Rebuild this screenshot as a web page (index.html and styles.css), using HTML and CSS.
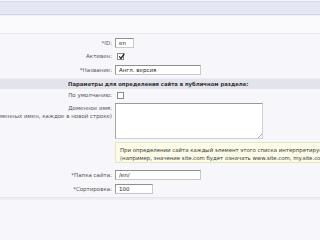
FILE: index.html
```html
<!DOCTYPE html>
<html lang="ru">
<head>
<meta charset="utf-8">
<link rel="stylesheet" href="styles.css">
</head>
<body>
<div class="topbar"></div>
<div class="subbar"></div>
<div class="form">
  <div class="row r-id">
    <div class="label">*ID:</div>
    <div class="ctrl"><span class="input w-id">en</span></div>
  </div>
  <div class="row r-active">
    <div class="label">Активен:</div>
    <div class="ctrl"><span class="check checked"><svg viewBox="0 0 7 7" width="7" height="7"><path d="M1.2 3.4 L3 5.4 L6.4 0.6" fill="none" stroke="#222" stroke-width="1.3"/></svg></span></div>
  </div>
  <div class="row r-name">
    <div class="label">*Название:</div>
    <div class="ctrl"><span class="input w-name">Англ. версия</span></div>
  </div>
  <div class="section">Параметры для определения сайта в публичном разделе:</div>
  <div class="row r-default">
    <div class="label">По умолчанию:</div>
    <div class="ctrl"><span class="check"></span></div>
  </div>
  <div class="row r-domain">
    <div class="label multi"><span>Доменное имя:</span><span>(список доменных имен, каждое в новой строке)</span></div>
    <div class="ctrl"><span class="textarea"><span class="grip"></span></span></div>
  </div>
  <div class="row r-hint">
    <div class="label"></div>
    <div class="ctrl"><div class="hint">При определении сайта каждый элемент этого списка интерпретируется как окончание домена<br>(например, значение site.com будет означать www.site.com, my.site.com и т.д.)</div></div>
  </div>
  <div class="row r-folder">
    <div class="label">*Папка сайта:</div>
    <div class="ctrl"><span class="input w-name">/en/</span></div>
  </div>
  <div class="row r-sort">
    <div class="label">*Сортировка:</div>
    <div class="ctrl"><span class="input w-sort">100</span></div>
  </div>
  <div class="footer"></div>
</div>
</body>
</html>
```

FILE: styles.css
```css
html, body {
  margin: 0;
  padding: 0;
  background: #f7f7fb;
  overflow: hidden;
}
body {
  width: 320px;
  height: 200px;
  font-family: "DejaVu Sans", Verdana, sans-serif;
  font-size: 5.5px;
  color: #555;
}
.topbar {
  height: 12px;
  margin-top: 1px;
  border-top: 1px solid #d6daeb;
  border-bottom: 1px solid #cfd4e7;
  background: repeating-linear-gradient(#e2e6f3 0 1px, #e7eaf5 1px 2px);
}
.subbar {
  height: 17px;
  background: #fafafd;
  border-top: 1px solid #eef0f7;
  border-bottom: 1px solid #e6e7ef;
}
.form {
  display: flex;
  flex-direction: column;
  padding-top: 4px;
}
.row {
  display: grid;
  grid-template-columns: 112px 1fr;
  column-gap: 3px;
  align-items: center;
}
.label {
  display: flex;
  justify-content: flex-end;
  white-space: nowrap;
  min-width: 0;
}
.label.multi {
  flex-direction: column;
  align-items: flex-end;
  align-self: start;
  padding-top: 1px;
  line-height: 8px;
}
.ctrl {
  display: flex;
  align-items: center;
  white-space: nowrap;
}
.input {
  box-sizing: border-box;
  height: 10px;
  padding: 0 3px;
  line-height: 8px;
  background: #fff;
  border: 1px solid #c9c9c9;
  border-top-color: #8f8f8f;
  border-left-color: #9a9a9a;
  color: #222;
  font-size: 5.5px;
}
.w-id { width: 19px; }
.w-name { width: 86px; }
.w-sort { width: 38px; }
.check {
  box-sizing: border-box;
  width: 7px;
  height: 7px;
  margin-left: 2px;
  border: 1px solid #8a8a8a;
  background: #fff;
  display: flex;
  align-items: center;
  justify-content: center;
  position: relative;
}
.check svg {
  display: block;
  position: absolute;
  left: 0;
  top: -1px;
}
.r-id { height: 10px; margin-bottom: 3px; }
.r-active { height: 10px; margin-bottom: 4px; }
.r-name { height: 10px; margin-bottom: 3px; }
.section {
  height: 10px;
  line-height: 10px;
  background: #e2e3eb;
  border-top: 1px solid #ededf3;
  font-weight: bold;
  font-size: 5.3px;
  color: #333;
  padding-left: 68px;
  white-space: nowrap;
  margin-bottom: 2px;
}
.r-default { height: 8px; margin-bottom: 4px; }
.r-domain { height: 36px; align-items: start; margin-bottom: 3px; }
.textarea {
  position: relative;
  box-sizing: border-box;
  display: block;
  width: 148px;
  height: 36px;
  background: #fff;
  border: 1px solid #cfcfcf;
  border-top-color: #9a9a9a;
  border-left-color: #a5a5a5;
}
.grip {
  position: absolute;
  right: 0;
  bottom: 0;
  width: 4px;
  height: 4px;
  background: linear-gradient(135deg, transparent 45%, #aaa 45% 55%, transparent 55%);
}
.r-hint { margin-bottom: 7px; }
.hint {
  box-sizing: border-box;
  width: 220px;
  height: 21px;
  padding: 3px 4px 0;
  line-height: 8px;
  background: #fbfbe8;
  border: 1px solid #e6e4c4;
  color: #3a3a3a;
  font-size: 5.4px;
  white-space: nowrap;
  overflow: hidden;
}
.r-folder { height: 10px; margin-bottom: 4px; }
.r-sort { height: 10px; }
.footer {
  margin-top: 3px;
  height: 8px;
  border-top: 1px solid #e4e5ee;
  background: #eeeff5;
}
```
